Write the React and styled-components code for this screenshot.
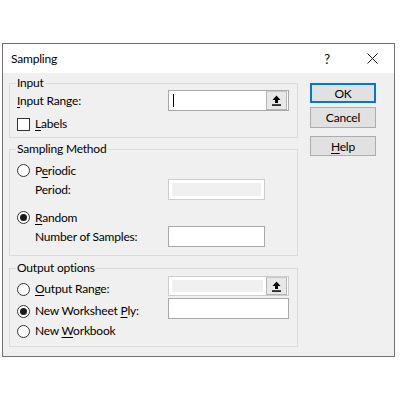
import React from "react";
import styled, { createGlobalStyle } from "styled-components";

const GlobalStyle = createGlobalStyle`
  body {
    margin: 0;
    background: #ffffff;
    font-family: Lato, "Segoe UI", sans-serif;
    font-size: 12px;
    letter-spacing: -0.2px;
    color: #000000;
  }
`;

const Page = styled.div`
  padding: 43px 0 0 2px;
`;

const Dialog = styled.div`
  box-sizing: border-box;
  width: 393px;
  height: 314px;
  border: 1px solid #707070;
  background: #f0f0f0;
  display: flex;
  flex-direction: column;
`;

const TitleBar = styled.div`
  height: 29px;
  flex-shrink: 0;
  background: #ffffff;
  display: flex;
  align-items: center;
  padding-left: 8px;
  font-size: 12px;
`;

const TitleHelp = styled.span`
  margin-left: auto;
  font-size: 13px;
  width: 8px;
  text-align: center;
`;

const TitleClose = styled.span`
  display: flex;
  margin: 0 16px 0 36px;
`;

const Body = styled.div`
  display: flex;
  gap: 12px;
  padding: 0 17px 0 6px;
`;

const Groups = styled.div`
  width: 289px;
  display: flex;
  flex-direction: column;
`;

const Group = styled.fieldset`
  margin: ${(props) => props.$top}px 0 0 0;
  padding: ${(props) => props.$padTop || 0}px 8px ${(props) => props.$padBottom || 0}px 7px;
  border: 1px solid #dcdcdc;
  min-width: 0;
`;

const Legend = styled.legend`
  padding: 0 1px;
  margin-left: -1px;
  font-size: 12px;
  line-height: 14px;
`;

const Row = styled.div`
  display: grid;
  grid-template-columns: 151px auto;
  align-items: center;
  height: ${(props) => props.$h}px;
  margin-top: ${(props) => props.$gap || 0}px;
`;

const FieldLabel = styled.span`
  padding-left: ${(props) => props.$indent || 0}px;
  line-height: 16px;
  white-space: nowrap;
`;

const Option = styled.label`
  display: flex;
  align-items: center;
  gap: 5px;
  line-height: 16px;
  white-space: nowrap;
  margin-top: ${(props) => props.$nudge || 0}px;
`;

const RadioDot = styled.span`
  box-sizing: border-box;
  width: 13px;
  height: 13px;
  border-radius: 50%;
  border: 1px solid #333333;
  background: #ffffff;
  display: flex;
  align-items: center;
  justify-content: center;

  &::after {
    content: "";
    width: 7px;
    height: 7px;
    border-radius: 50%;
    background: ${(props) => (props.$checked ? "#1a1a1a" : "transparent")};
  }
`;

const CheckSquare = styled.span`
  box-sizing: border-box;
  width: 13px;
  height: 13px;
  border: 1px solid #333333;
  background: #ffffff;
`;

const Key = styled.span`
  text-decoration: underline;
  text-underline-offset: 2px;
`;

const TextBox = styled.div`
  box-sizing: border-box;
  width: ${(props) => props.$w}px;
  height: ${(props) => props.$h || 21}px;
  border: 1px solid ${(props) => (props.$disabled ? "#cccccc" : "#a9a9a9")};
  background: #ffffff;
  display: flex;
  align-items: stretch;
`;

const TextArea = styled.div`
  flex: 1;
  display: flex;
  align-items: center;
  padding-left: 4px;
  background: ${(props) => (props.$disabled ? "#f0f0f0" : "#ffffff")};
  box-shadow: ${(props) =>
    props.$disabled ? "inset 0 0 0 3px #ffffff" : "none"};
`;

const Caret = styled.span`
  width: 1px;
  height: 13px;
  background: #000000;
`;

const PickButton = styled.span`
  box-sizing: border-box;
  width: 21px;
  margin: 0 1px 0 0;
  background: #e8e8e8;
  border: 1px solid #b5b5b5;
  border-top-color: #c8c8c8;
  display: flex;
  align-items: center;
  justify-content: center;
`;

const Buttons = styled.div`
  display: flex;
  flex-direction: column;
  padding-top: 10px;
`;

const PushButton = styled.button`
  box-sizing: border-box;
  width: 66px;
  height: ${(props) => props.$h || 20}px;
  margin-top: ${(props) => props.$gap || 0}px;
  padding: 0;
  font-family: inherit;
  font-size: 12px;
  letter-spacing: inherit;
  color: #000000;
  background: #e1e1e1;
  border: ${(props) =>
    props.$primary ? "2px solid #0078d7" : "1px solid #adadad"};
`;

const CollapseIcon = () => (
  <svg width="9" height="11" viewBox="0 0 9 11">
    <path d="M4.5 0.5 L8.5 5 H6 V8 H3 V5 H0.5 Z" fill="#000" />
    <rect x="0" y="9.3" width="9" height="1.5" fill="#000" />
  </svg>
);

const CloseIcon = () => (
  <svg width="11" height="11" viewBox="0 0 11 11">
    <path d="M0.5 0.5 L10.5 10.5 M10.5 0.5 L0.5 10.5" stroke="#1a1a1a" strokeWidth="1" />
  </svg>
);

const Radio = ({ checked, nudge, children }) => (
  <Option $nudge={nudge}>
    <RadioDot $checked={checked} />
    <span>{children}</span>
  </Option>
);

const RangeBox = ({ disabled, children }) => (
  <TextBox $w={121} $h={disabled ? 20 : 21} $disabled={disabled}>
    <TextArea $disabled={disabled}>{children}</TextArea>
    <PickButton>
      <CollapseIcon />
    </PickButton>
  </TextBox>
);

export default function App() {
  return (
    <Page>
      <GlobalStyle />
      <Dialog>
        <TitleBar>
          <span>Sampling</span>
          <TitleHelp>?</TitleHelp>
          <TitleClose>
            <CloseIcon />
          </TitleClose>
        </TitleBar>
        <Body>
          <Groups>
            <Group $top={3}>
              <Legend>Input</Legend>
              <Row $h={21}>
                <FieldLabel>
                  <Key>I</Key>nput Range:
                </FieldLabel>
                <RangeBox>
                  <Caret />
                </RangeBox>
              </Row>
              <Row $h={26}>
                <Option>
                  <CheckSquare />
                  <span>
                    <Key>L</Key>abels
                  </span>
                </Option>
              </Row>
            </Group>

            <Group $top={4} $padTop={6} $padBottom={8}>
              <Legend>Sampling Method</Legend>
              <Row $h={17}>
                <Radio>
                  P<Key>e</Key>riodic
                </Radio>
              </Row>
              <Row $h={21}>
                <FieldLabel $indent={18}>Period:</FieldLabel>
                <TextBox $w={97} $disabled>
                  <TextArea $disabled />
                </TextBox>
              </Row>
              <Row $h={17} $gap={9}>
                <Radio checked>
                  <Key>R</Key>andom
                </Radio>
              </Row>
              <Row $h={21}>
                <FieldLabel $indent={18}>Number of Samples:</FieldLabel>
                <TextBox $w={97} />
              </Row>
            </Group>

            <Group $top={5} $padBottom={6}>
              <Legend>Output options</Legend>
              <Row $h={20}>
                <Radio nudge={6}>
                  <Key>O</Key>utput Range:
                </Radio>
                <RangeBox disabled />
              </Row>
              <Row $h={21} $gap={3}>
                <Radio checked nudge={5}>
                  New Worksheet <Key>P</Key>ly:
                </Radio>
                <TextBox $w={121} />
              </Row>
              <Row $h={18} $gap={3}>
                <Radio>
                  New <Key>W</Key>orkbook
                </Radio>
              </Row>
            </Group>
          </Groups>

          <Buttons>
            <PushButton $primary>OK</PushButton>
            <PushButton $h={21} $gap={4}>
              Cancel
            </PushButton>
            <PushButton $gap={8}>
              <Key>H</Key>elp
            </PushButton>
          </Buttons>
        </Body>
      </Dialog>
    </Page>
  );
}
